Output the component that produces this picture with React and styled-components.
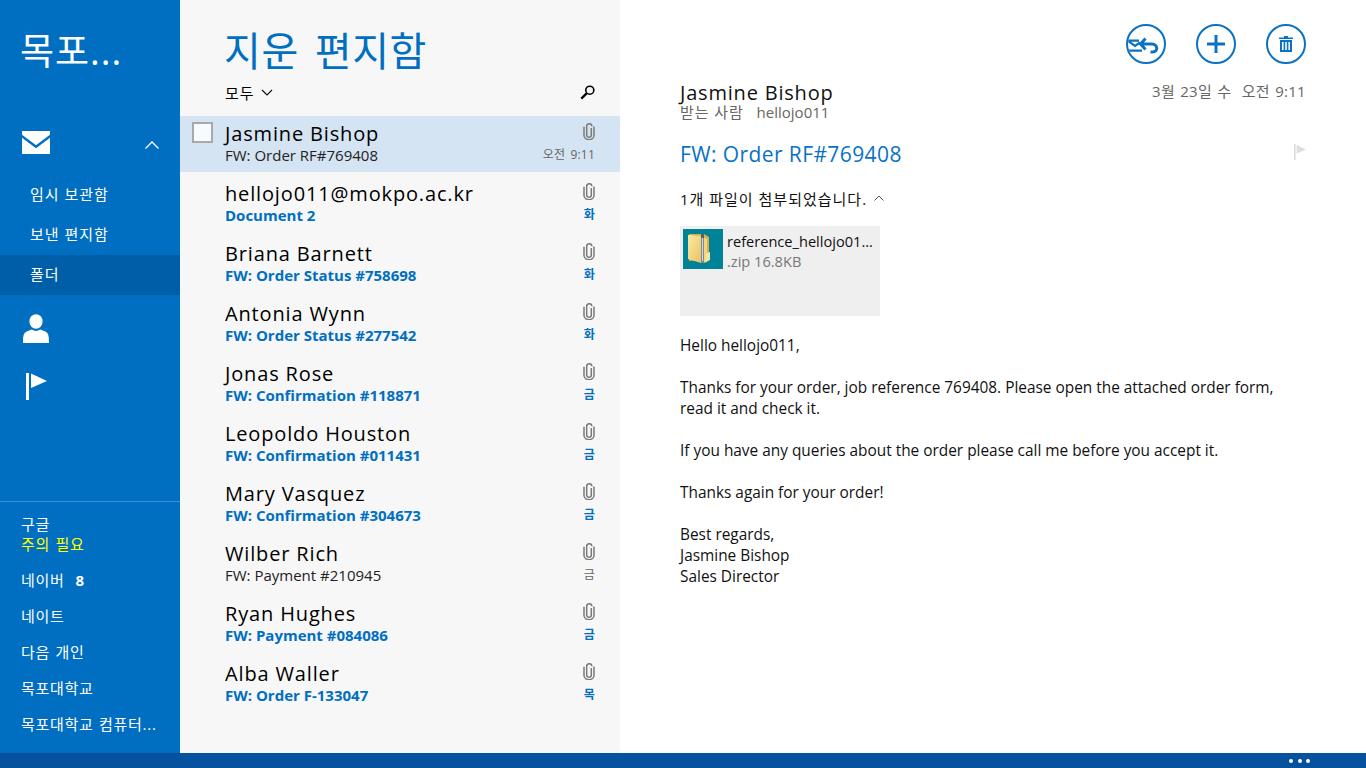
import React from 'react';
import styled, { createGlobalStyle } from 'styled-components';

const FONT = '"Open Sans", "Noto Sans CJK KR", sans-serif';

const Global = createGlobalStyle`
  html, body { margin: 0; padding: 0; height: 100%; overflow: hidden; }
  body { font-family: ${FONT}; background: #fff; }
  * { box-sizing: border-box; }
`;

const Page = styled.div`
  width: 1366px; height: 768px; display: flex; flex-direction: column; overflow: hidden;
`;
const Main = styled.div`
  flex: 1; display: flex; min-height: 0;
`;
const BottomBar = styled.div`
  height: 15px; background: #07529f; display: flex; align-items: center; justify-content: flex-end;
  gap: 4.500px; padding-right: 56px;
`;
const Dot = styled.span`
  width: 4px; height: 4px; border-radius: 50%; background: #fff;
`;

const Sidebar = styled.aside`
  width: 180px; background: #006fc1; color: #fff; display: flex; flex-direction: column;
`;
const AccountTitle = styled.div`
  font-size: 37px; line-height: 50px; padding: 26px 0 0 20px; height: 116px; letter-spacing: 1px;
`;
const MailRow = styled.div`
  height: 52px; display: flex; align-items: center; justify-content: space-between;
  padding: 0 21px 0 22px;
`;
const CollapseIcon = styled.svg`
  margin-top: 5px;
`;
const FolderList = styled.div`
  display: flex; flex-direction: column; margin-top: 7px;
`;
const FolderItem = styled.div`
  height: 40px; line-height: 38px; padding-left: 30px; font-size: 15px; letter-spacing: 1px;
  background: ${p => (p.$active ? '#005da8' : 'transparent')};
`;
const NavIcons = styled.div`
  margin-top: 4px; display: flex; flex-direction: column;
`;
const NavIcon = styled.div`
  height: 58px; display: flex; align-items: center; padding-left: ${p => p.$pad}px;
`;
const Spacer = styled.div`
  flex: 1;
`;
const Accounts = styled.div`
  border-top: 1px solid #3c90d4; padding: 12px 0 11px 21px; display: flex; flex-direction: column;
`;
const AccountItem = styled.div`
  height: 36px; font-size: 15px; line-height: 20px; padding-top: 8px; letter-spacing: .7px; word-spacing: 1px; white-space: nowrap;
`;
const AccountStack = styled.div`
  height: 48px; font-size: 15px; line-height: 20px; letter-spacing: .7px; word-spacing: 1px;
`;
const Attention = styled.div`
  color: #ff0;
`;
const Count = styled.b`
  margin-left: 11px; font-size: 15px;
`;

const ListPane = styled.section`
  width: 440px; background: #f7f7f7; display: flex; flex-direction: column;
`;
const ListTitle = styled.h1`
  margin: 0; font-weight: 400; font-size: 40px; line-height: 50px; color: #006fc1;
  padding: 26px 0 0 44px; height: 78px; letter-spacing: .6px; word-spacing: 5px;
`;
const FilterRow = styled.div`
  height: 38px; display: flex; align-items: center; justify-content: space-between;
  padding: 0 25px 10px 45px; font-size: 15px; letter-spacing: 1px; color: #000;
`;
const FilterLabel = styled.div`
  display: flex; align-items: center; gap: 6px;
`;
const Row = styled.div`
  position: relative; height: 56px; margin-bottom: 4px; padding: 6px 25px 0 45px;
  display: flex; justify-content: space-between;
  background: ${p => (p.$selected ? '#d4e4f2' : 'transparent')};
`;
const Check = styled.div`
  position: absolute; left: 12px; top: 6px; width: 21px; height: 21px;
  border: 2px solid #a9a9a9; background: #f7fbff;
`;
const RowText = styled.div`
  min-width: 0;
`;
const Sender = styled.div`
  font-size: 20px; line-height: 24px; color: #000; letter-spacing: .85px; white-space: nowrap;
`;
const Subject = styled.div`
  font-size: 15px; line-height: 18px; margin-top: -.5px; white-space: nowrap;
  font-weight: ${p => (p.$unread ? 700 : 400)};
  color: ${p => (p.$unread ? '#006fc1' : '#222')};
`;
const RowMeta = styled.div`
  display: flex; flex-direction: column; align-items: flex-end; gap: 7px; padding-top: 1px;
`;
const MetaDate = styled.div`
  font-size: 12px; line-height: 16px; white-space: nowrap; word-spacing: 2px; letter-spacing: .2px;
  font-weight: ${p => (p.$unread ? 700 : 400)};
  color: ${p => (p.$unread ? '#006fc1' : '#666')};
`;

const Reader = styled.section`
  flex: 1; background: #fff; padding: 24px 60px 0 60px; display: flex; flex-direction: column;
`;
const Commands = styled.div`
  height: 40px; display: flex; justify-content: flex-end; gap: 30px;
`;
const Round = styled.div`
  width: 40px; height: 40px; border-radius: 50%; border: 2px solid #0a72c4;
  display: flex; align-items: center; justify-content: center; overflow: hidden;
`;
const HeaderRow = styled.div`
  display: flex; justify-content: space-between; margin-top: 17px; height: 39px;
`;
const FromName = styled.div`
  font-size: 20px; line-height: 24px; letter-spacing: .8px; color: #111;
`;
const ToLine = styled.div`
  display: flex; font-size: 15px; line-height: 14px; color: #666;
`;
const ToLabel = styled.span`
  letter-spacing: .9px; margin-right: 13px;
`;
const SentAt = styled.div`
  font-size: 15px; line-height: 20px; color: #666; letter-spacing: .3px; word-spacing: 1px;
`;
const SubjectRow = styled.div`
  display: flex; justify-content: space-between; align-items: center; margin-top: 21px; height: 26px;
`;
const SubjectTitle = styled.div`
  font-size: 21px; color: #0a72c4; letter-spacing: .4px;
`;
const SubjectFlag = styled.svg`
  margin-top: -4px;
`;
const AttachLine = styled.div`
  display: flex; align-items: center; gap: 7px; margin-top: 21px; height: 20px;
  font-size: 15px; letter-spacing: 1px; color: #111;
`;
const Attachment = styled.div`
  margin-top: 18px; width: 200px; height: 90px; background: #efefef; display: flex; padding: 3px;
`;
const ZipThumb = styled.div`
  width: 40px; height: 40px; background: #008299; flex: none;
`;
const FileInfo = styled.div`
  margin-left: 4px; padding-top: 2px; min-width: 0;
`;
const FileName = styled.div`
  font-size: 14.6px; line-height: 20px; color: #111; white-space: nowrap;
`;
const FileSize = styled.div`
  font-size: 14.6px; line-height: 20px; color: #777;
`;
const Body = styled.div`
  margin-top: 19px; font-size: 15.4px; line-height: 21px; color: #111; width: 610px;
`;
const Para = styled.p`
  margin: 0 0 21px;
`;

const Clip = () => (
  <svg width="12" height="17" viewBox="0 0 12 17" fill="none" stroke="#7a7a7a" strokeWidth="1.5">
    <path d="M8.300 5v7a2.300 2.300 0 0 1-4.600 0V3.600a2.600 2.600 0 0 1 5.200-.3" />
    <path d="M1 3.800v8.400a5 4.500 0 0 0 10 0V3.500" />
  </svg>
);

const rows = [
  { n: 'hellojo011@mokpo.ac.kr', s: 'Document 2', d: '화', u: true },
  { n: 'Briana Barnett', s: 'FW: Order Status #758698', d: '화', u: true },
  { n: 'Antonia Wynn', s: 'FW: Order Status #277542', d: '화', u: true },
  { n: 'Jonas Rose', s: 'FW: Confirmation #118871', d: '금', u: true },
  { n: 'Leopoldo Houston', s: 'FW: Confirmation #011431', d: '금', u: true },
  { n: 'Mary Vasquez', s: 'FW: Confirmation #304673', d: '금', u: true },
  { n: 'Wilber Rich', s: 'FW: Payment #210945', d: '금', u: false },
  { n: 'Ryan Hughes', s: 'FW: Payment #084086', d: '금', u: true },
  { n: 'Alba Waller', s: 'FW: Order F-133047', d: '목', u: true },
];

export default function App() {
  return (
    <Page>
      <Global />
      <Main>
        <Sidebar>
          <AccountTitle>목포...</AccountTitle>
          <MailRow>
            <svg width="28" height="23" viewBox="0 0 28 23">
              <rect width="28" height="23" fill="#fff" />
              <path d="M-1 4.500 14 15.800 29 4.500" fill="none" stroke="#006fc1" strokeWidth="2.400" />
            </svg>
            <CollapseIcon width="14" height="8" viewBox="0 0 14 8" fill="none" stroke="#fff" strokeWidth="1.3">
              <path d="M.5 7.500 7 1l6.500 6.500" />
            </CollapseIcon>
          </MailRow>
          <FolderList>
            <FolderItem>임시 보관함</FolderItem>
            <FolderItem>보낸 편지함</FolderItem>
            <FolderItem $active>폴더</FolderItem>
          </FolderList>
          <NavIcons>
            <NavIcon $pad={23}>
              <svg width="26" height="29" viewBox="0 0 26 29" fill="#fff">
                <ellipse cx="13" cy="7.500" rx="6.600" ry="7.300" />
                <path d="M0 29c0-8 .6-10.500 5-12 1.600-.6 3.200-1.200 3.800-1.400 2.400 1.800 6 1.800 8.400 0 .8.3 2.200.8 3.800 1.400 4.400 1.500 5 4 5 12z" />
              </svg>
            </NavIcon>
            <NavIcon $pad={26}>
              <svg width="21" height="27" viewBox="0 0 21 27" fill="#fff">
                <rect width="3" height="27" />
                <path d="M5 .5 21 8 5 15z" />
              </svg>
            </NavIcon>
          </NavIcons>
          <Spacer />
          <Accounts>
            <AccountStack>구글<Attention>주의 필요</Attention></AccountStack>
            <AccountItem>네이버<Count>8</Count></AccountItem>
            <AccountItem>네이트</AccountItem>
            <AccountItem>다음 개인</AccountItem>
            <AccountItem>목포대학교</AccountItem>
            <AccountItem>목포대학교 컴퓨터...</AccountItem>
          </Accounts>
        </Sidebar>
        <ListPane>
          <ListTitle>지운 편지함</ListTitle>
          <FilterRow>
            <FilterLabel>
              모두
              <svg width="12" height="7" viewBox="0 0 12 7" fill="none" stroke="#111" strokeWidth="1.2"><path d="M1 1l5 5 5-5" /></svg>
            </FilterLabel>
            <svg width="15" height="15" viewBox="0 0 15 15" fill="none" stroke="#000">
              <circle cx="9.800" cy="5.200" r="4" strokeWidth="1.600" />
              <path d="M7 8 1.300 13.700" strokeWidth="2.400" />
            </svg>
          </FilterRow>
          <Row $selected>
            <Check />
            <RowText>
              <Sender>Jasmine Bishop</Sender>
              <Subject>FW: Order RF#769408</Subject>
            </RowText>
            <RowMeta>
              <Clip />
              <MetaDate>오전 9:11</MetaDate>
            </RowMeta>
          </Row>
          {rows.map(r => (
            <Row key={r.n}>
              <RowText>
                <Sender>{r.n}</Sender>
                <Subject $unread={r.u}>{r.s}</Subject>
              </RowText>
              <RowMeta>
                <Clip />
                <MetaDate $unread={r.u}>{r.d}</MetaDate>
              </RowMeta>
            </Row>
          ))}
        </ListPane>
        <Reader>
          <Commands>
            <Round>
              <svg width="36" height="36" viewBox="0 0 36 36" fill="none" stroke="#0a72c4" strokeWidth="2.200">
                <path d="M0 14.700h11M0 15l7 5 5-3.500M0 24.700h14" />
                <path d="M17.500 12.500 12.500 18l5 5.500M13 18h11c6 0 6.500 8 .5 8h-2" strokeWidth="3" />
              </svg>
            </Round>
            <Round>
              <svg width="20" height="20" viewBox="0 0 20 20" fill="#0a72c4"><path d="M8.500 1h3v7.500H19v3h-7.500V19h-3v-7.500H1v-3h7.500z" /></svg>
            </Round>
            <Round>
              <svg width="14" height="16" viewBox="0 0 14 16" fill="#0a72c4">
                <path d="M5 0h4v1.500h5V3H0V1.500h5z" />
                <path d="M1 4h12v12H1zM3 6v8h1.600V6zm3.200 0v8h1.600V6zm3.200 0v8H11V6z" fillRule="evenodd" />
              </svg>
            </Round>
          </Commands>
          <HeaderRow>
            <div>
              <FromName>Jasmine Bishop</FromName>
              <ToLine><ToLabel>받는 사람</ToLabel>hellojo011</ToLine>
            </div>
            <SentAt>3월 23일 수 &nbsp;오전 9:11</SentAt>
          </HeaderRow>
          <SubjectRow>
            <SubjectTitle>FW: Order RF#769408</SubjectTitle>
            <SubjectFlag width="12" height="16" viewBox="0 0 12 16" fill="#ddd">
              <rect width="1.600" height="16" />
              <path d="M2.600 1 12 5.600 2.600 9.600z" />
            </SubjectFlag>
          </SubjectRow>
          <AttachLine>
            1개 파일이 첨부되었습니다.
            <svg width="10" height="6" viewBox="0 0 10 6" fill="none" stroke="#555" strokeWidth="1"><path d="M.5 5.500 5 1l4.500 4.500" /></svg>
          </AttachLine>
          <Attachment>
            <ZipThumb>
              <svg width="40" height="40" viewBox="0 0 40 40">
                <defs>
                  <linearGradient id="zipFolder" x1="0" y1="0" x2="1" y2="1">
                    <stop offset="0" stopColor="#fbeaa6" />
                    <stop offset="1" stopColor="#e8c25e" />
                  </linearGradient>
                </defs>
                <path fill="#d9b04c" d="M6 5h15l5 3v22l-20 2z" />
                <path fill="url(#zipFolder)" d="M5 6l13 1v27L5 30z" />
                <path fill="#f3d67f" d="M20 8l4 2v23l-4 1z" />
                <path fill="#f6e3a0" d="M23 24l4-1v8l-4 2z" />
                <rect x="18" y="5" width="3" height="29" fill="#7c8a97" />
                <rect x="19" y="9" width="1" height="23" fill="#cfd8de" />
                <rect x="18" y="5" width="3" height="4" fill="#52626f" />
              </svg>
            </ZipThumb>
            <FileInfo>
              <FileName>reference_hellojo01...</FileName>
              <FileSize>.zip 16.8KB</FileSize>
            </FileInfo>
          </Attachment>
          <Body>
            <Para>Hello hellojo011,</Para>
            <Para>Thanks for your order, job reference 769408. Please open the attached order form, read it and check it.</Para>
            <Para>If you have any queries about the order please call me before you accept it.</Para>
            <Para>Thanks again for your order!</Para>
            <Para>Best regards,<br />Jasmine Bishop<br />Sales Director</Para>
          </Body>
        </Reader>
      </Main>
      <BottomBar><Dot /><Dot /><Dot /></BottomBar>
    </Page>
  );
}
